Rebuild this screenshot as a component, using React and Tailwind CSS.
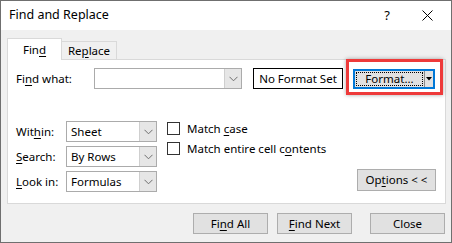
import React from 'react';

const font = { fontFamily: '"Noto Sans", "Liberation Sans", sans-serif' };

const U = ({ children }) => <span className="underline underline-offset-2">{children}</span>;

const Chevron = () => (
  <svg width="9" height="6" viewBox="0 0 9 6" fill="none">
    <path d="M0.5 0.8 L4.5 4.8 L8.5 0.8" stroke="#6e6e6e" strokeWidth="1" />
  </svg>
);

const Select = ({ value, width }) => (
  <div className={`flex h-[21px] border border-[#ababab] bg-white ${width}`}>
    <div className="flex-1 pl-[4px] flex items-center leading-none">{value}</div>
    <div className="w-[17px] bg-[#e6e6e6] border-l border-[#cfcfcf] flex items-center justify-center">
      <Chevron />
    </div>
  </div>
);

const Button = ({ children, className = '' }) => (
  <button className={`h-[21px] w-[75px] border border-[#adadad] bg-[#e1e1e1] flex items-center justify-center leading-none ${className}`}>
    {children}
  </button>
);

const Checkbox = ({ children }) => (
  <label className="flex items-center h-[13px] gap-[7px]">
    <span className="w-[13px] h-[13px] border border-[#333] bg-white" />
    <span className="leading-none">{children}</span>
  </label>
);

const App = () => {
  return (
    <div style={font} className="w-[452px] h-[243px] border border-[#6f6f6f] bg-[#f0f0f0] flex flex-col text-[11.5px] text-black overflow-hidden">
      {/* title bar */}
      <div className="h-[29px] bg-white flex items-center pl-[8px] text-[12.5px]">
        <span>Find and Replace</span>
        <span className="ml-auto mr-[32px] text-[13px]">?</span>
        <svg width="11" height="11" viewBox="0 0 11 11" className="mr-[18px]">
          <path d="M0.5 0.5 L10.5 10.5 M10.5 0.5 L0.5 10.5" stroke="#000" strokeWidth="1" />
        </svg>
      </div>

      <div className="pl-[6px] pr-[5px] pt-[8px]">
        {/* tabs */}
        <div className="flex items-end h-[21px] relative z-10">
          <div className="h-[22px] w-[55px] bg-white border border-[#d9d9d9] border-b-0 flex items-center justify-center -mb-[1px]">
            Fin<U>d</U>
          </div>
          <div className="h-[18px] w-[55px] bg-[#f0f0f0] border border-[#d9d9d9] border-l-0 border-b-0 flex items-center justify-center">
            Re<U>p</U>lace
          </div>
        </div>

        {/* panel */}
        <div className="h-[145px] bg-white border border-[#d9d9d9] relative flex flex-col">
          <div className="flex items-center mt-[8px] pl-[8px]">
            <span className="w-[78px]">Fi<U>n</U>d what:</span>
            <Select value="" width="w-[148px]" />
            <div className="ml-[11px] w-[90px] h-[21px] border border-black flex items-center justify-center leading-none">
              No Format Set
            </div>
            <div className="ml-[10px] relative">
              <div className="w-[82px] h-[20px] border-2 border-[#0078d7] bg-[#e1e1e1] flex">
                <div className="flex-1 m-[1px] border border-dotted border-black flex items-center justify-center leading-none">
                  Format...
                </div>
                <div className="w-[9px] border-l border-[#8a8a8a] flex items-center justify-center">
                  <svg width="6" height="4" viewBox="0 0 6 4">
                    <path d="M0 0 H6 L3 3.5 Z" fill="#000" />
                  </svg>
                </div>
              </div>
              <div className="absolute -left-[7px] -top-[10px] w-[97px] h-[36px] border-[3px] border-[#ee3a3a] shadow-[0_0_4px_rgba(0,0,0,0.35)]" />
            </div>
          </div>

          <div className="flex mt-[32px] pl-[8px]">
            <div className="flex flex-col gap-[4px]">
              <div className="flex items-center">
                <span className="w-[50px]">Wit<U>h</U>in:</span>
                <Select value="Sheet" width="w-[91px]" />
              </div>
              <div className="flex items-center">
                <span className="w-[50px]"><U>S</U>earch:</span>
                <Select value="By Rows" width="w-[91px]" />
              </div>
              <div className="flex items-center">
                <span className="w-[50px]"><U>L</U>ook in:</span>
                <Select value="Formulas" width="w-[91px]" />
              </div>
            </div>
            <div className="flex flex-col gap-[7px] ml-[10px] pt-[1px]">
              <Checkbox>Match <U>c</U>ase</Checkbox>
              <Checkbox>Match entire cell c<U>o</U>ntents</Checkbox>
            </div>
            <div className="ml-auto self-end mr-[9px] mb-[1px]">
              <Button className="w-[79px] h-[22px]">Op<U>t</U>ions &lt; &lt;</Button>
            </div>
          </div>
        </div>

        {/* bottom buttons */}
        <div className="flex justify-end mt-[9px] pr-[1px]">
          <Button>Fi<U>n</U>d All</Button>
          <Button className="ml-[9px]"><U>F</U>ind Next</Button>
          <Button className="ml-[18px]">Close</Button>
        </div>
      </div>
    </div>
  );
};

export default App;
